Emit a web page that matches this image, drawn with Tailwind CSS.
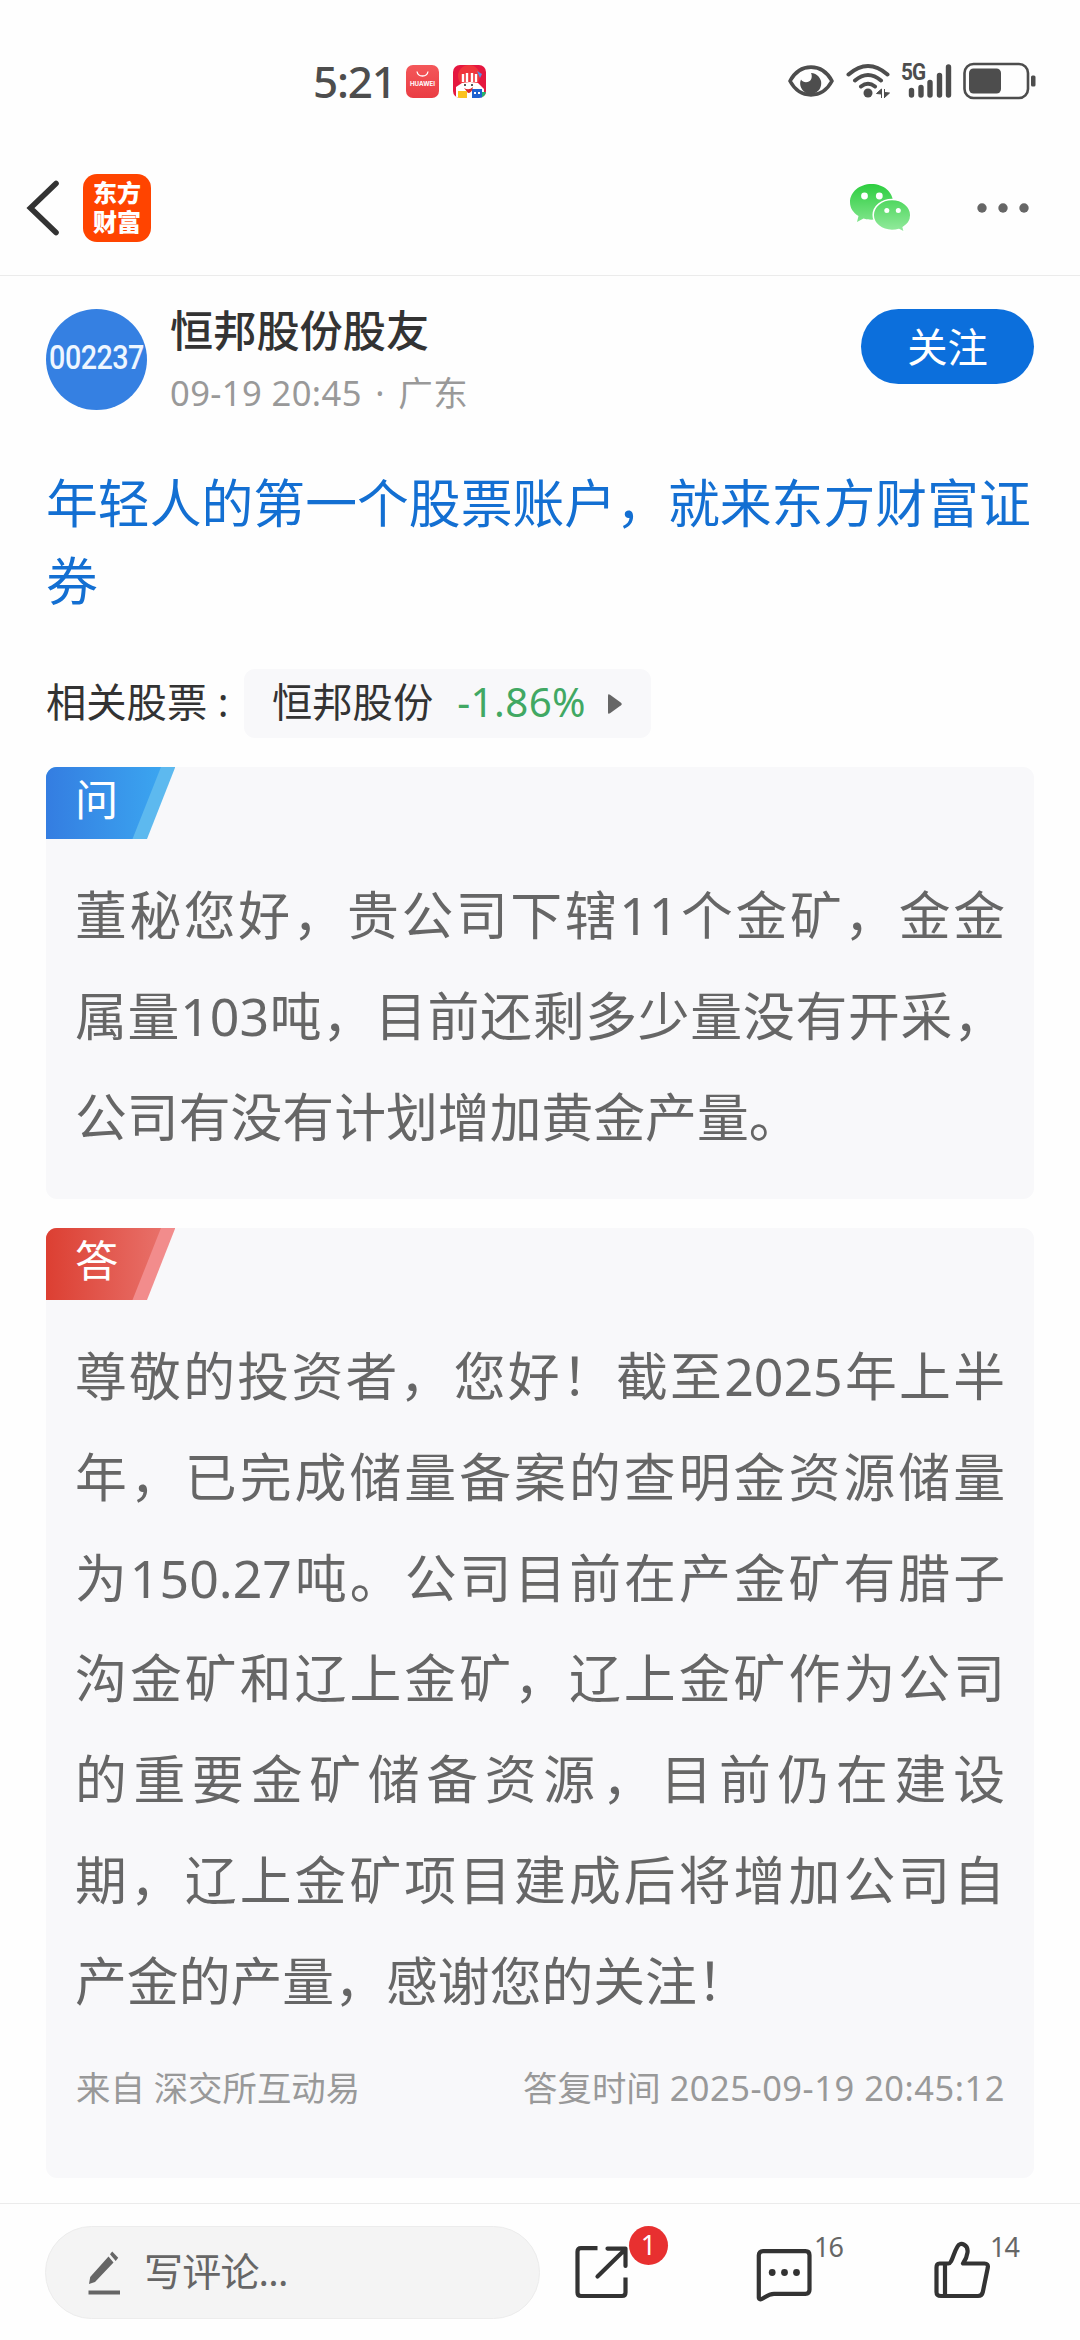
<!DOCTYPE html>
<html lang="zh-CN">
<head>
    <meta charset="UTF-8">
    <title>恒邦股份股友</title>
    <script src="https://cdn.jsdelivr.net/npm/@tailwindcss/browser@4"></script>
</head>
<body class="w-[1080px] h-[2340px] flex flex-col overflow-hidden bg-[#fefefe] text-[#333] font-['Noto_Sans','Noto_Sans_CJK_SC',sans-serif]">

    <!-- status bar -->
    <div class="h-[141px] pt-[21px] pl-[313px] pr-[43px] flex items-center shrink-0 text-[#4d4d4d]">
        <span class="w-[93px] text-[44px] leading-[45px] font-medium tracking-[-1.2px] whitespace-nowrap">5:21</span>
        <div class="w-[33px] h-[33px] rounded-[7px] bg-linear-to-b from-[#f4575a] to-[#ea3c43] flex flex-col items-center shrink-0">
            <svg class="w-[13px] h-[6px] mt-[6px]" viewBox="0 0 13 6" fill="none" stroke="#fff" stroke-width="1.3"><path d="M1 .5c1 6 10 6 11 0"/></svg>
            <span class="mt-[3px] text-[6.2px] leading-[8px] font-bold text-white font-[Inter,sans-serif]">HUAWEI</span>
        </div>
        <svg class="ml-[14px] w-[33px] h-[33px] shrink-0" viewBox="0 0 33 33">
            <defs><clipPath id="sale"><rect width="33" height="33" rx="7"/></clipPath></defs>
            <g clip-path="url(#sale)">
                <rect width="33" height="33" fill="#e5173f"/>
                <circle cx="16" cy="11" r="11" fill="#f0353c"/>
                <path d="M10 9v8M14 8v9M19 8v9M23 9v8" stroke="#fff" stroke-width="2.4"/>
                <path d="M24 6l5 3-2 4z" fill="#5b8de0"/>
                <path d="M3 22l6-4 8-1 8 1 6 6v9H3z" fill="#fff"/>
                <path d="M11 23q5 3 9-1-1 6-5 6z" fill="#d92a2a"/>
                <path d="M11 20h2M18 20h2" stroke="#222" stroke-width="1.6"/>
                <rect x="5" y="26" width="9" height="7" fill="#fbc21d"/>
                <rect x="19" y="24" width="10" height="9" fill="#1f62d0"/>
                <path d="M21 28h2M25 28h2" stroke="#fff" stroke-width="2"/>
                <path d="M29 27h4v6h-4z" fill="#23b26d"/>
            </g>
        </svg>

        <div class="ml-auto flex items-center">
            <svg class="w-[46px] h-[34px]" viewBox="0 0 46 34">
                <path d="M2 17C12 -1.500 34 -1.500 44 17C34 35.500 12 35.500 2 17Z" fill="none" stroke="#4d4d4d" stroke-width="3.600" stroke-linejoin="round"/>
                <path d="M23 9a10.500 10.500 0 1 1-10 6.500c2 3.500 8 3.500 10 0 1-2 1-4.500 0-6.500z" fill="#4d4d4d"/>
            </svg>
            <svg class="ml-[12px] w-[45px] h-[36px]" viewBox="0 0 45 36" fill="none" stroke="#4d4d4d" stroke-width="4" stroke-linecap="round">
                <path d="M2.500 11.500Q22 -5.500 41.500 11.500M9 17.500Q22 6.500 35 17.500M15 23.500Q22 18 29 23.500"/>
                <circle cx="22" cy="30" r="4.500" fill="#4d4d4d" stroke="none"/>
                <path d="M35.500 26v9M30.500 30.500l5-4.500v5zM38.500 26v9M43.500 30l-5 4.500v-5z" fill="#4d4d4d" stroke-width="1" stroke-linecap="butt"/>
            </svg>
            <div class="relative ml-[10px] w-[52px] h-[36px]">
                <span class="absolute left-0 top-[1px] text-[23px] leading-[18px] font-bold font-[Roboto,sans-serif] scale-x-90 origin-left tracking-[-1px]">5G</span>
                <svg class="w-[52px] h-[36px]" viewBox="0 0 52 36" stroke="#4d4d4d" stroke-width="5.400" stroke-linecap="round">
                    <path d="M10.500 27.500v4.500M20 24.500v7.500M29 19.500v12.500M38.500 12.500v19.500M47.500 4v28"/>
                </svg>
            </div>
            <svg class="ml-[10px] w-[74px] h-[38px]" viewBox="0 0 74 38">
                <rect x="1.500" y="2" width="63.500" height="34" rx="9" fill="none" stroke="#4d4d4d" stroke-width="2.600"/>
                <rect x="6" y="6.500" width="32" height="25" rx="4.500" fill="#4d4d4d"/>
                <rect x="68" y="13.500" width="4.500" height="11" rx="1.500" fill="#4d4d4d"/>
            </svg>
        </div>
    </div>

    <!-- nav bar -->
    <div class="h-[135px] pl-[26px] pr-[51px] flex items-center shrink-0 border-b border-[#ebebeb]">
        <svg class="w-[34px] h-[56px]" viewBox="0 0 34 56" fill="none" stroke="#333" stroke-width="5.600" stroke-linecap="round"><path d="M30 3.500L4.500 28 30 52.500" stroke-linejoin="miter"/></svg>
        <div class="ml-[23px] w-[68px] h-[68px] rounded-[14px] bg-[#ff4400] text-white text-[24px] leading-[29px] font-black text-center pt-[4px]">
            <p>东方</p>
            <p>财富</p>
        </div>
        <svg class="ml-auto w-[62px] h-[50px]" viewBox="0 0 62 50">
            <defs>
                <linearGradient id="wx" gradientUnits="userSpaceOnUse" x1="0" y1="0" x2="0" y2="48"><stop offset="0" stop-color="#2bcd3d"/><stop offset="1" stop-color="#93ea9d"/></linearGradient>
            </defs>
            <path d="M22.500 1C10.500 1 1 9 1 19c0 6 3 10.500 8.500 14L8 39l6.500-3.500c2.500.8 5 1.200 8 1.200C34.500 36.700 44 29 44 19S34.500 1 22.500 1z" fill="url(#wx)"/>
            <path d="M43 16.500c-10.500 0-18.800 7-18.800 15.500S32.500 47.500 43 47.500c2.500 0 5-.4 7-1l5.500 3-1.300-5.200C59 41.500 61.800 37 61.800 32c0-8.500-8.300-15.500-18.800-15.500z" fill="url(#wx)" stroke="#fff" stroke-width="1.500"/>
            <g fill="#fff"><circle cx="15.500" cy="13" r="3.400"/><circle cx="30.300" cy="13" r="3.400"/><circle cx="37.800" cy="27.500" r="2.500"/><circle cx="49.300" cy="27.500" r="2.500"/></g>
        </svg>
        <svg class="ml-[66px] w-[52px] h-[10px]" viewBox="0 0 52 10" fill="#666"><circle cx="5" cy="5" r="4.700"/><circle cx="26" cy="5" r="4.700"/><circle cx="47" cy="5" r="4.700"/></svg>
    </div>

    <main class="px-[46px] pt-[33px]">
        <!-- author -->
        <div class="h-[101px] flex">
            <div class="w-[101px] h-[101px] rounded-full bg-[#3580e2] text-[#eef6ff] text-[33px] leading-[97px] font-medium text-center tracking-[-0.6px] font-[Roboto,sans-serif] whitespace-nowrap">
                <span class="inline-block scale-x-[0.87] -mx-4">002237</span>
            </div>
            <div class="ml-[23px]">
                <h1 class="text-[43.2px] leading-[44px] font-medium">恒邦股份股友</h1>
                <p class="mt-[20px] text-[34.56px] leading-[40px] text-[#999] tracking-[0.4px]">09-19 20:45<span class="mx-[4px]"> · </span>广东</p>
            </div>
            <button class="ml-auto w-[173px] h-[75px] rounded-full bg-[#0c6fdc] text-white text-[40.3px] leading-[75px]">关注</button>
        </div>

        <p class="mt-[54px] text-[51.84px] leading-[78px] text-[#136fd2] whitespace-nowrap">年轻人的第一个股票账户，就来东方财富证<br>券</p>

        <div class="mt-[49px] h-[69px] flex items-center text-[40.3px] leading-[65px]">
            <span class="w-[198px] pb-[4px] whitespace-nowrap">相关股票 :</span>
            <div class="w-[407px] h-[69px] rounded-[11px] bg-[#f8f8fa] pl-[28px] flex items-center whitespace-nowrap">
                <span class="pb-[4px]">恒邦股份</span>
                <span class="ml-[24px] w-[129px] pb-[4px] text-[#41a863] tracking-[0.4px]">-1.86%</span>
                <svg class="ml-[22px] w-[14px] h-[20px]" viewBox="0 0 14 20" fill="#666"><path d="M0 1.500Q0-.5 2 .7l11 8q1.500 1.300 0 2.600l-11 8Q0 20.500 0 18.500z"/></svg>
            </div>
        </div>

        <!-- question -->
        <section class="mt-[29px] h-[432px] rounded-[11px] bg-[#f8f8fa] overflow-hidden">
            <div class="relative w-[129px] h-[72px]">
                <svg class="w-[129px] h-[72px]" viewBox="0 0 129 72">
                    <defs><linearGradient id="ask"><stop offset="0" stop-color="#347de1"/><stop offset="1" stop-color="#3ba5f0"/></linearGradient></defs>
                    <path d="M0 0h129.300L101 72H0z" fill="#5db9ef"/>
                    <path d="M0 0h115L86.500 72H0z" fill="url(#ask)"/>
                </svg>
                <span class="absolute left-[29px] top-0 text-[43.2px] leading-[66px] text-white">问</span>
            </div>
            <div class="px-[29px] pt-[26px] text-[51.84px] leading-[100.8px] text-[#666] whitespace-nowrap">
                <p class="[text-align-last:justify]">董秘您好，贵公司下辖11个金矿，金金</p>
                <p class="[text-align-last:justify]">属量103吨，目前还剩多少量没有开采，</p>
                <p>公司有没有计划增加黄金产量。</p>
            </div>
        </section>

        <!-- answer -->
        <section class="mt-[29px] h-[950px] rounded-[11px] bg-[#f8f8fa] overflow-hidden">
            <div class="relative w-[129px] h-[72px]">
                <svg class="w-[129px] h-[72px]" viewBox="0 0 129 72">
                    <defs><linearGradient id="reply"><stop offset="0" stop-color="#dc3f32"/><stop offset="1" stop-color="#e87069"/></linearGradient></defs>
                    <path d="M0 0h129.300L101 72H0z" fill="#f28c8c"/>
                    <path d="M0 0h115L86.500 72H0z" fill="url(#reply)"/>
                </svg>
                <span class="absolute left-[29px] top-0 text-[43.2px] leading-[66px] text-white">答</span>
            </div>
            <div class="px-[29px] pt-[26px] text-[51.84px] leading-[100.8px] text-[#666] whitespace-nowrap">
                <p class="[text-align-last:justify]">尊敬的投资者，您好！截至2025年上半</p>
                <p class="[text-align-last:justify]">年，已完成储量备案的查明金资源储量</p>
                <p class="[text-align-last:justify]">为150.27吨。公司目前在产金矿有腊子</p>
                <p class="[text-align-last:justify]">沟金矿和辽上金矿，辽上金矿作为公司</p>
                <p class="[text-align-last:justify]">的重要金矿储备资源，目前仍在建设</p>
                <p class="[text-align-last:justify]">期，辽上金矿项目建成后将增加公司自</p>
                <p>产金的产量，感谢您的关注！</p>
            </div>
            <div class="mt-[30px] pl-[30px] pr-[29px] flex justify-between text-[34.4px] leading-[52px] text-[#999] whitespace-nowrap">
                <span>来自 深交所互动易</span>
                <span>答复时间 <span class="tracking-[0.55px]">2025-09-19 20:45:12</span></span>
            </div>
        </section>
    </main>

    <!-- comment bar -->
    <footer class="mt-auto h-[137px] shrink-0 pt-[22px] pl-[45px] flex items-start border-t border-[#ebebeb]">
        <div class="w-[495px] h-[93px] rounded-full border border-[#ececec] bg-[#f4f4f4] pl-[42px] flex items-center text-[39px] leading-[88px] text-[#666]">
            <svg class="w-[33px] h-[44px]" viewBox="0 0 33 44" fill="#666"><path d="M1 33l1.200-7L20.500 5.500l5 6L7 31zM22 3.300L24.200.5l6 6.300-2.500 3.200zM.5 39.500H32v4H.5z"/></svg>
            <span class="ml-[23px] pb-1 tracking-[-0.8px]">写评论...</span>
        </div>

        <div class="relative ml-[34px] mt-[19px] w-[56px] h-[56px]">
            <svg class="w-[56px] h-[56px]" viewBox="0 0 56 56" fill="none" stroke="#333" stroke-width="4.200" stroke-linejoin="round">
                <path d="M23.500 3.200H7Q3.500 3.200 3.500 6.700V47.500Q3.500 51 7 51H48Q51.500 51 51.500 47.500V32.500"/>
                <path d="M33.500 3.600H51.500V21M51 4.500L23.500 31.500" stroke-linecap="round"/>
            </svg>
            <span class="absolute left-[55px] top-[-19px] w-[39px] h-[39px] rounded-full bg-[#e83030] text-white text-[27px] leading-[37px] text-center">1</span>
        </div>

        <div class="relative ml-[125px] mt-[20px] w-[58px] h-[58px]">
            <svg class="w-[58px] h-[58px]" viewBox="0 0 58 58" fill="none" stroke="#333" stroke-width="4.200" stroke-linejoin="round">
                <path d="M8 5.200H50.500Q54.500 5.200 54.500 9.200V43.800Q54.500 47.800 50.500 47.800H19C12 47.800 9 53 5.500 53.300Q3.800 53.400 3.800 51.500V9.200Q3.800 5.200 8 5.200z"/>
                <g fill="#333" stroke="none"><circle cx="17.200" cy="26.500" r="3.400"/><circle cx="29.500" cy="26.500" r="3.400"/><circle cx="41.500" cy="26.500" r="3.400"/></g>
            </svg>
            <span class="absolute left-[59px] top-[-14px] text-[27px] leading-[30px] tracking-[-1px] text-[#666]">16</span>
        </div>

        <div class="relative ml-[120px] mt-[14px] w-[58px] h-[60px]">
            <svg class="w-[58px] h-[60px]" viewBox="0 0 58 60" fill="none" stroke="#333" stroke-width="4.200" stroke-linejoin="round">
                <path d="M6.500 23.500H15.500C19 23.500 20 14 24.500 6.500C27.500 1 35.500 5 34.500 12.500C34 17 32.500 20 30 23.500H51.500Q55.500 23.500 54.800 27.500L49.800 52Q49 56 45 56H8Q3.500 56 3.500 52V27.500Q3.500 23.500 6.500 23.500zM12 23.500V56"/>
            </svg>
            <span class="absolute left-[57px] top-[-8px] text-[27px] leading-[30px] tracking-[-1px] text-[#666]">14</span>
        </div>
    </footer>
</body>
</html>
